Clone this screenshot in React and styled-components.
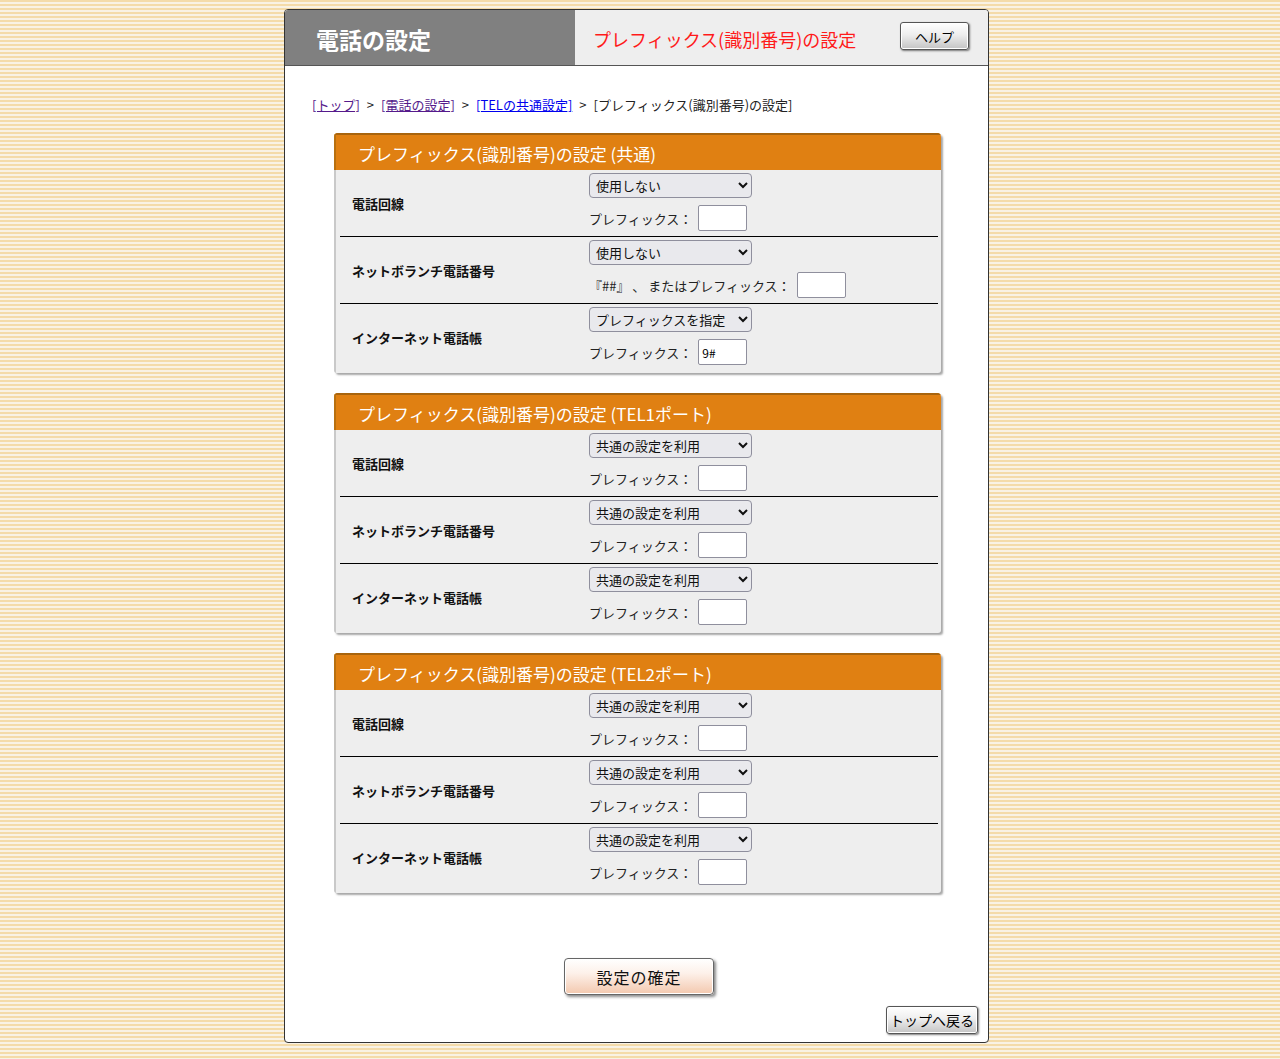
import React from "react";
import styled, { createGlobalStyle } from "styled-components";

const GlobalStyle = createGlobalStyle`
    html, body {
        margin: 0;
        padding: 0;
    }
    body {
        min-height: 1059px;
        font-family: "Noto Sans CJK JP", "Noto Sans", sans-serif;
        background: repeating-linear-gradient(
            to bottom,
            #f4dba9 0px,
            #f4dba9 2px,
            #f9f2e4 2px,
            #f9f2e4 4px
        );
    }
`;

const Page = styled.div`
    padding: 9px 0 15px;
`;

const Panel = styled.div`
    width: 703px;
    margin-left: calc(50% - 356px);
    background: #fff;
    border: 1px solid #333;
    border-radius: 4px;
    overflow: hidden;
`;

const Header = styled.div`
    display: flex;
    height: 55px;
    border-bottom: 1px solid #555;
    background: #eeeeee;
`;

const HeaderTitle = styled.div`
    width: 259px;
    padding-left: 31px;
    background: #808080;
    color: #fff;
    font-size: 23px;
    font-weight: bold;
    display: flex;
    align-items: center;
    padding-top: 2px;
`;

const PageTitle = styled.div`
    flex: 1;
    display: flex;
    align-items: center;
    justify-content: space-between;
    padding: 2px 19px 0 18px;
    color: #ff1a1a;
    font-size: 18px;
`;

const GrayButton = styled.button`
    font-family: "Noto Sans CJK JP", sans-serif;
    font-size: ${(p) => p.$fs}px;
    color: #000;
    height: 28px;
    padding: 0 ${(p) => p.$px}px;
    border: 1px solid #555;
    border-radius: 3px;
    background: linear-gradient(to bottom, #ffffff 0%, #eeeeee 45%, #c4c4c4 100%);
    box-shadow: inset 0 0 0 1px #fff, 1px 1px 2px rgba(0, 0, 0, 0.5);
    cursor: pointer;
`;

const HelpButton = styled(GrayButton)`
    margin-bottom: 5px;
`;

const Content = styled.div`
    padding: 29px 48px 8px 49px;
`;

const Breadcrumb = styled.div`
    margin-left: -22px;
    font-size: 13px;
    color: #222;
    margin-bottom: 19px;
`;

const Crumb = styled.a`
    color: ${(p) => (p.$visited ? "#551a8b" : "#0000ee")};
    text-decoration: underline;
    cursor: pointer;
`;

const Sep = styled.span`
    margin: 0 7px;
`;

const Cards = styled.div`
    display: flex;
    flex-direction: column;
    gap: 20px;
`;

const Card = styled.section`
    width: 607px;
    border-radius: 4px 4px 3px 3px;
    box-shadow: 2px 2px 2px rgba(0, 0, 0, 0.35);
    background: #eeeeee;
    overflow: hidden;
`;

const CardHeader = styled.div`
    height: 37px;
    box-sizing: border-box;
    border-top: 2px solid #a8640e;
    border-left: 2px solid #b8700f;
    background: #e08012;
    color: #fff;
    font-size: 17px;
    padding: 2px 0 0 22px;
    line-height: 34px;
`;

const CardBody = styled.div`
    border-left: 2px solid #c9c9c9;
    padding: 0 3px 3px 4px;
`;

const Row = styled.div`
    display: grid;
    grid-template-columns: 249px 1fr;
    height: 66px;
    border-bottom: ${(p) => (p.$last ? "none" : "1px solid #000")};
`;

const RowLabel = styled.div`
    display: flex;
    align-items: center;
    padding-left: 12px;
    font-size: 13px;
    font-weight: bold;
    color: #111;
`;

const RowFields = styled.div`
    display: flex;
    flex-direction: column;
    gap: 7px;
    padding-top: 3px;
`;

const Select = styled.select`
    width: 163px;
    height: 25px;
    font-family: "Noto Sans CJK JP", sans-serif;
    font-size: 13px;
    color: #111;
    background-color: #e9e9ed;
    border: 1px solid #8f8f9d;
    border-radius: 4px;
    padding: 0 2px;
`;

const PrefixLine = styled.div`
    display: flex;
    align-items: center;
    font-size: 13px;
    color: #222;
    white-space: pre;
`;

const PrefixInput = styled.input`
    width: 49px;
    height: 26px;
    box-sizing: border-box;
    margin-left: 6px;
    border: 1px solid #8f8f9d;
    border-radius: 2px;
    background: #fff;
    font-family: "Noto Sans CJK JP", sans-serif;
    font-size: 12px;
    padding: 0 3px;
`;

const ConfirmWrap = styled.div`
    display: flex;
    justify-content: center;
    margin-top: 65px;
    padding-left: 4px;
`;

const ConfirmButton = styled.button`
    width: 150px;
    height: 37px;
    font-family: "Noto Sans CJK JP", sans-serif;
    font-size: 16px;
    letter-spacing: 1px;
    color: #111;
    border: 1px solid #666;
    border-radius: 4px;
    background: linear-gradient(to bottom, #ffffff 0%, #fdf1ea 40%, #f3c8ae 100%);
    box-shadow: inset 0 0 0 1px #fff, 2px 2px 3px rgba(0, 0, 0, 0.45);
    cursor: pointer;
`;

const Footer = styled.div`
    display: flex;
    justify-content: flex-end;
    margin: 11px -38px 0 0;
`;

const ALL = ["共通の設定を利用", "使用しない", "プレフィックスを指定"];

const cards = [
    {
        title: "プレフィックス(識別番号)の設定 (共通)",
        rows: [
            { label: "電話回線", value: "使用しない", opts: ["使用しない", "プレフィックスを指定"], text: "プレフィックス：", input: "" },
            { label: "ネットボランチ電話番号", value: "使用しない", opts: ["使用しない", "『##』を付加", "プレフィックスを指定"], text: "『##』 、 またはプレフィックス：", input: "" },
            { label: "インターネット電話帳", value: "プレフィックスを指定", opts: ["使用しない", "プレフィックスを指定"], text: "プレフィックス：", input: "9#" },
        ],
    },
    {
        title: "プレフィックス(識別番号)の設定 (TEL1ポート)",
        rows: [
            { label: "電話回線", value: "共通の設定を利用", opts: ALL, text: "プレフィックス：", input: "" },
            { label: "ネットボランチ電話番号", value: "共通の設定を利用", opts: ALL, text: "プレフィックス：", input: "" },
            { label: "インターネット電話帳", value: "共通の設定を利用", opts: ALL, text: "プレフィックス：", input: "" },
        ],
    },
    {
        title: "プレフィックス(識別番号)の設定 (TEL2ポート)",
        rows: [
            { label: "電話回線", value: "共通の設定を利用", opts: ALL, text: "プレフィックス：", input: "" },
            { label: "ネットボランチ電話番号", value: "共通の設定を利用", opts: ALL, text: "プレフィックス：", input: "" },
            { label: "インターネット電話帳", value: "共通の設定を利用", opts: ALL, text: "プレフィックス：", input: "" },
        ],
    },
];

const PrefixCard = ({ title, rows }) => (
    <Card>
        <CardHeader>{title}</CardHeader>
        <CardBody>
            {rows.map((r, i) => (
                <Row key={r.label} $last={i === rows.length - 1}>
                    <RowLabel>{r.label}</RowLabel>
                    <RowFields>
                        <Select defaultValue={r.value}>
                            {r.opts.map((o) => (
                                <option key={o}>{o}</option>
                            ))}
                        </Select>
                        <PrefixLine>
                            {r.text}
                            <PrefixInput type="text" defaultValue={r.input} />
                        </PrefixLine>
                    </RowFields>
                </Row>
            ))}
        </CardBody>
    </Card>
);

const App = () => {
    return (
        <Page>
            <GlobalStyle />
            <Panel>
                <Header>
                    <HeaderTitle>電話の設定</HeaderTitle>
                    <PageTitle>
                        プレフィックス(識別番号)の設定
                        <HelpButton $fs={13} $px={14}>ヘルプ</HelpButton>
                    </PageTitle>
                </Header>
                <Content>
                    <Breadcrumb>
                        <Crumb $visited>[トップ]</Crumb>
                        <Sep>&gt;</Sep>
                        <Crumb $visited>[電話の設定]</Crumb>
                        <Sep>&gt;</Sep>
                        <Crumb>[TELの共通設定]</Crumb>
                        <Sep>&gt;</Sep>
                        [プレフィックス(識別番号)の設定]
                    </Breadcrumb>
                    <Cards>
                        {cards.map((c) => (
                            <PrefixCard key={c.title} {...c} />
                        ))}
                    </Cards>
                    <ConfirmWrap>
                        <ConfirmButton>設定の確定</ConfirmButton>
                    </ConfirmWrap>
                    <Footer>
                        <GrayButton $fs={14} $px={3}>トップへ戻る</GrayButton>
                    </Footer>
                </Content>
            </Panel>
        </Page>
    );
};

export default App;
